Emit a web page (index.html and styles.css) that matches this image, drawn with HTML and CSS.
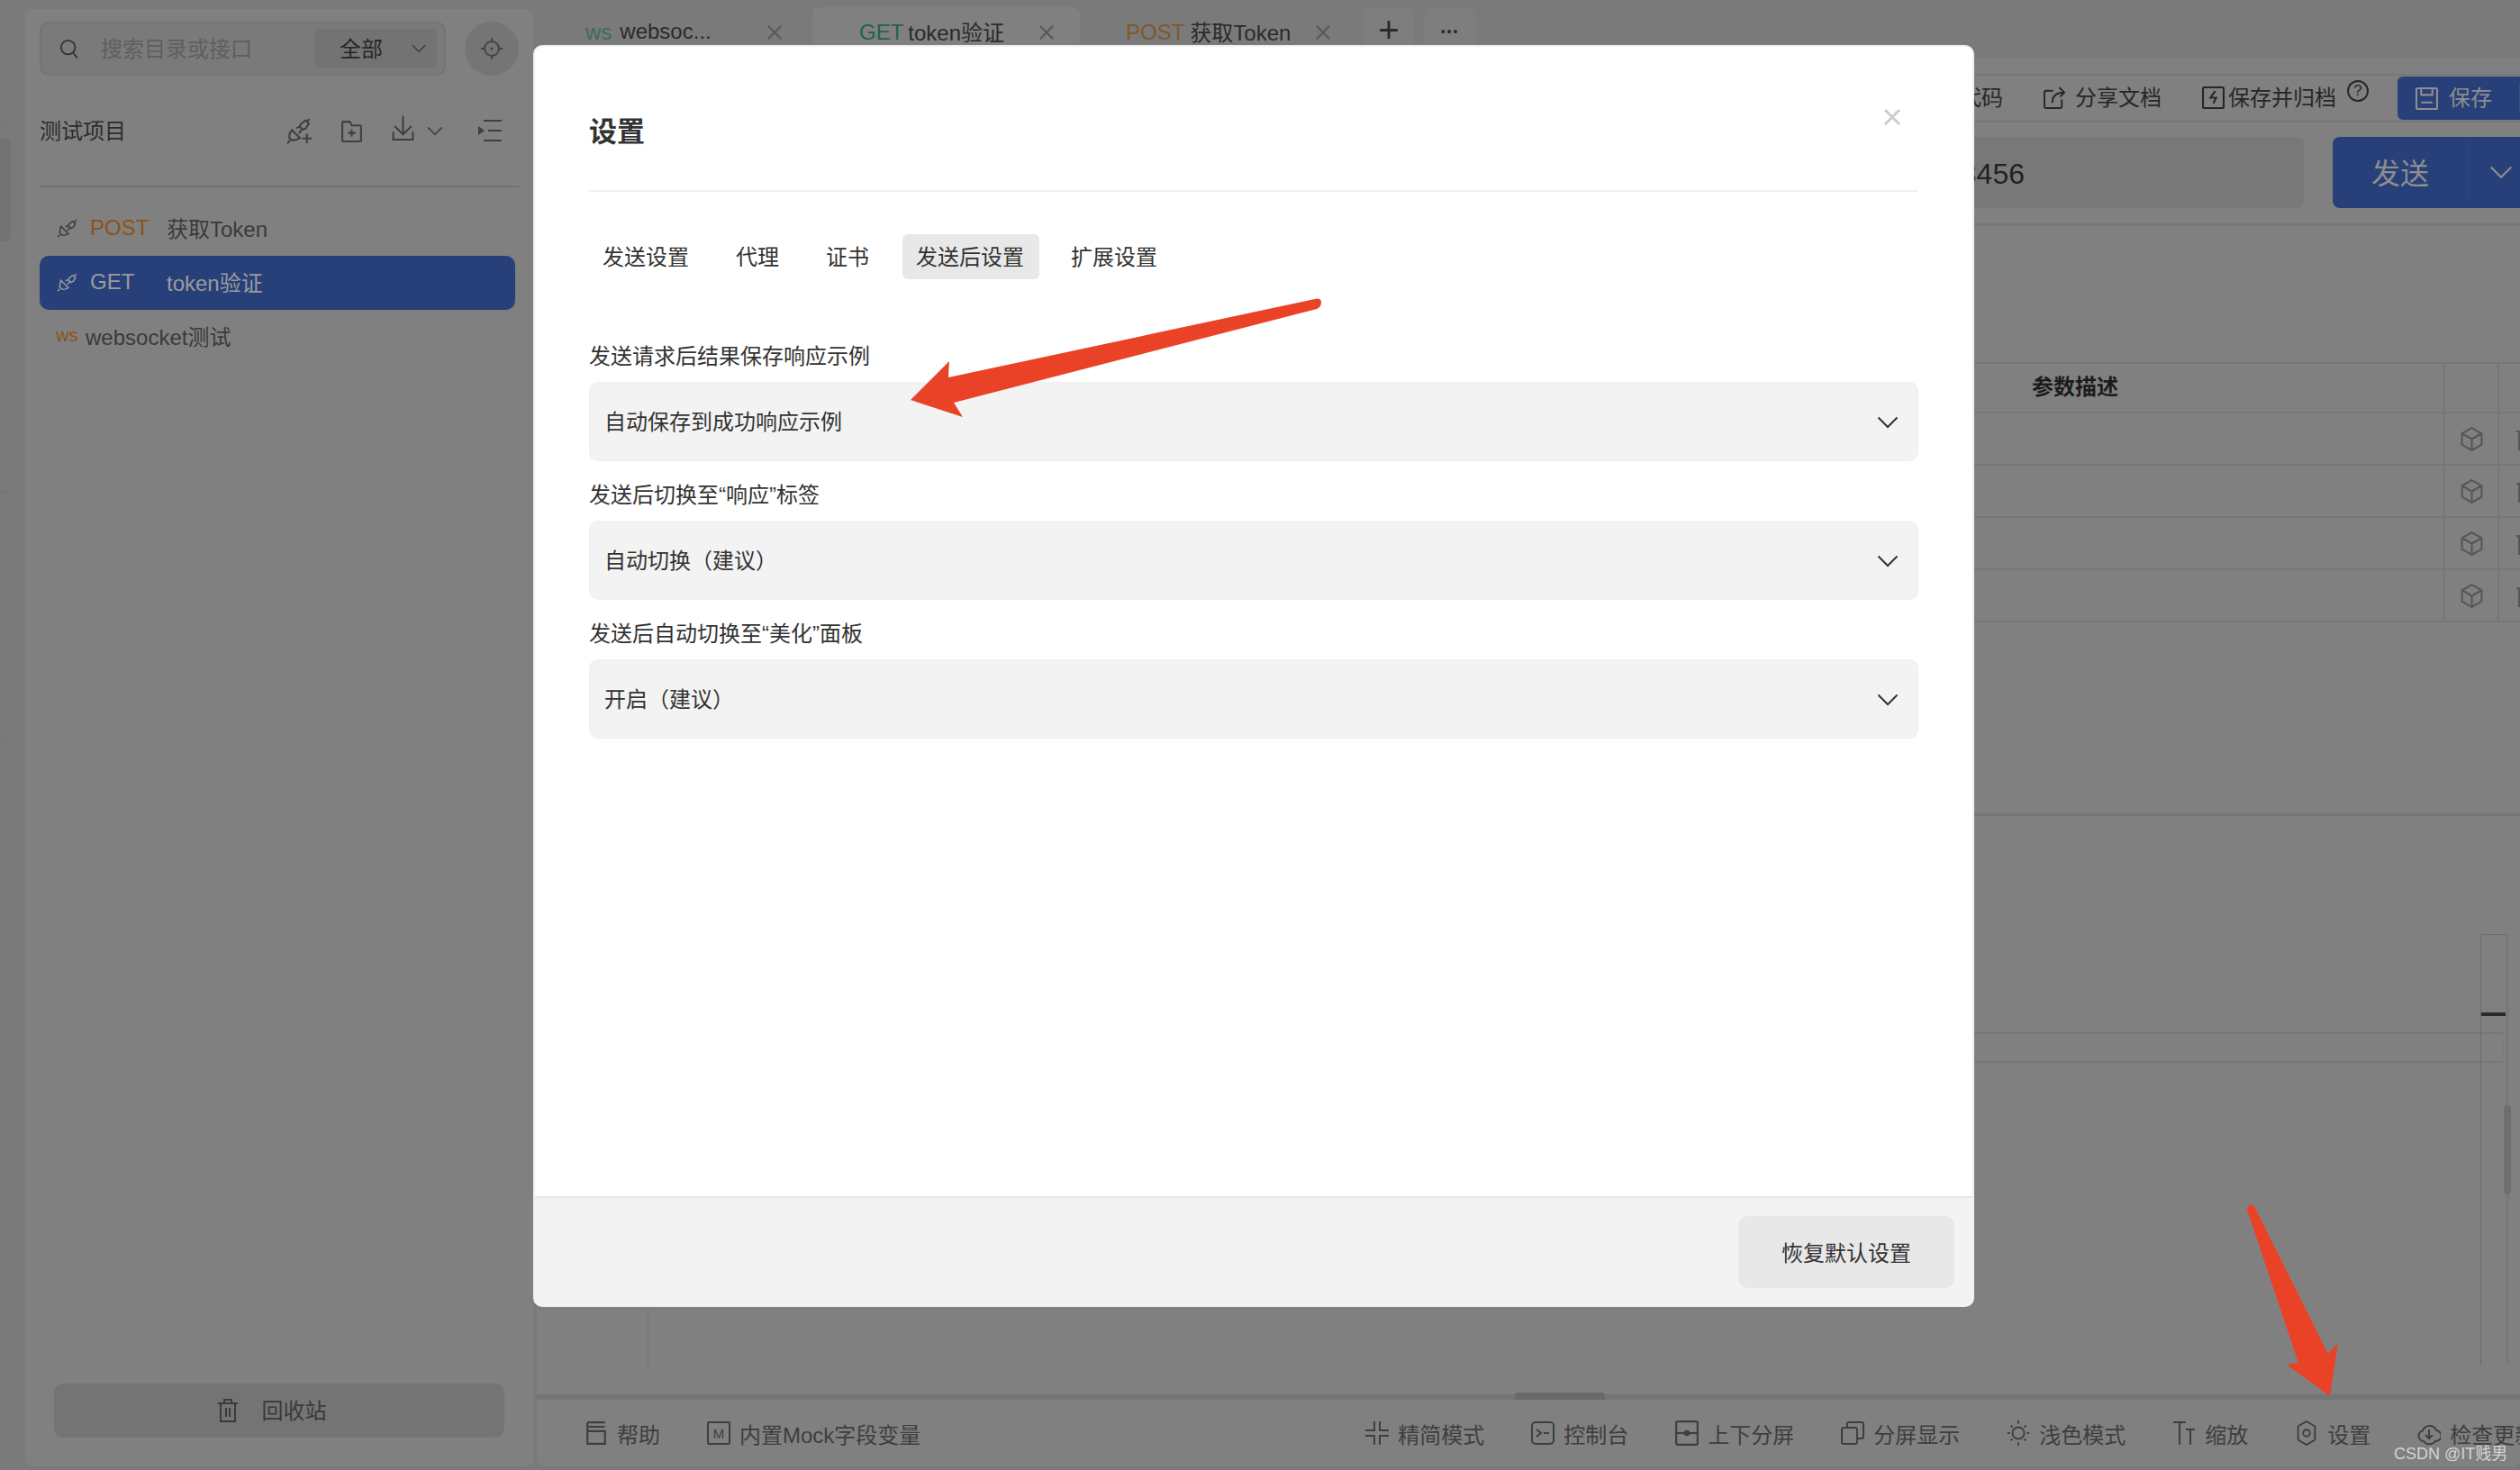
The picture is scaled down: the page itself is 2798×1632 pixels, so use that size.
FILE: index.html
```html
<!DOCTYPE html>
<html>
  <head>
    <meta charset="utf-8">
    <title>设置</title>
    <link rel="stylesheet" href="styles.css">
  </head>
  <body>
    <svg class="sprite" xmlns="http://www.w3.org/2000/svg">
      <symbol id="i-search" viewBox="0 0 24 24"><circle cx="10.5" cy="10.5" r="8.5"/><path d="M16.5 17l5 6"/></symbol>
      <symbol id="i-chev" viewBox="0 0 24 14"><path d="M1.5 1.5L12 12 22.5 1.5"/></symbol>
      <symbol id="i-locate" viewBox="0 0 24 24"><circle cx="12" cy="12" r="8"/><circle cx="12" cy="12" r="1.6" class="solid"/><path d="M12 0v4M12 20v4M0 12h4M20 12h4"/></symbol>
      <symbol id="i-plug" viewBox="0 0 24 24"><path d="M23 1l-2.500 2.500M14.500 5.500l4-2.500 3 3-2.500 4-3 1.500-3-3zM13 8l-3.500 1.500M14 11l-2 3"/><path d="M1 23l2.500-2.500M5 10l9 9-3.500 1.500-4 .500-3-3 .500-4z" transform="translate(-1 -1)"/></symbol>
      <symbol id="i-plug-add" viewBox="0 0 28 28"><path d="M25 1l-2.500 2.500M15.500 6.500l5-4 3.500 3.500-3 5-3.500 1.500-3.500-3.500zM14.500 9l-4 2M16 13l-2.500 3.500"/><path d="M1 27l3-3M6 13l8.500 8.500-4 2-4.500.500-3-3 .500-4.500z"/><path d="M22 17v10M17 22h10"/></symbol>
      <symbol id="i-folder-add" viewBox="0 0 24 24"><path d="M2 3a1 1 0 0 1 1-1h7l2 4h9a1 1 0 0 1 1 1v15a1 1 0 0 1-1 1H3a1 1 0 0 1-1-1z"/><path d="M12 10v8M8 14h8"/></symbol>
      <symbol id="i-download" viewBox="0 0 24 28"><path d="M12 1v19M3 12l9 9 9-9M1.500 18v8.500h21V18"/></symbol>
      <symbol id="i-collapse" viewBox="0 0 26 26"><path d="M6 2h20M11 13h15M6 24h20"/><path d="M0 8l7 5-7 5z" class="solid"/></symbol>
      <symbol id="i-trash" viewBox="0 0 24 28"><path d="M1 6h22M8 5V2h8v3M4 6v20h16V6M10 11v10M14 11v10"/></symbol>
      <symbol id="i-share" viewBox="0 0 26 26"><path d="M11 5H3a2 2 0 0 0-2 2v16a2 2 0 0 0 2 2h16a2 2 0 0 0 2-2v-8"/><path d="M10 19c0-7 4-12 13-12M18 1l6 6-5 5"/></symbol>
      <symbol id="i-archive" viewBox="0 0 24 24"><rect x="1" y="1" width="22" height="22" rx="1"/><path d="M14 5l-5 7h6l-3 6"/></symbol>
      <symbol id="i-save" viewBox="0 0 24 24"><rect x="1" y="1" width="22" height="22" rx="1.500"/><path d="M6 1v7h12V1M6 16h12"/></symbol>
      <symbol id="i-cube" viewBox="0 0 24 26"><path d="M12 1l10.500 6v12L12 25 1.500 19V7zM1.500 7L12 13l10.500-6M12 13v12"/></symbol>
      <symbol id="i-book" viewBox="0 0 24 24"><path d="M3 1h18M3 1v22h18V10H3M3 5.500h18"/></symbol>
      <symbol id="i-compress" viewBox="0 0 26 26"><path d="M10 0v10H0M16 0v10h10M0 16h10v10M26 16H16v10"/></symbol>
      <symbol id="i-console" viewBox="0 0 26 26"><rect x="1" y="1" width="24" height="24" rx="4"/><path d="M6 9l5 4-5 4M14 13h6"/></symbol>
      <symbol id="i-split" viewBox="0 0 24 26"><rect x="1" y="1" width="22" height="24" rx="1"/><path d="M1 13h22"/><circle cx="12" cy="13" r="3" class="solid"/></symbol>
      <symbol id="i-screens" viewBox="0 0 26 26"><rect x="1" y="7" width="17" height="18" rx="2"/><path d="M7 7V3a2 2 0 0 1 2-2h14a2 2 0 0 1 2 2v14a2 2 0 0 1-2 2h-5"/></symbol>
      <symbol id="i-sun" viewBox="0 0 26 30"><circle cx="13" cy="15" r="7"/><path d="M13 0v4M13 26v4M0 15h3M23 15h3M4 6l2 2M22 6l-2 2M4 24l2-2M22 24l-2-2"/></symbol>
      <symbol id="i-font" viewBox="0 0 26 28"><path d="M1 2h14M8 2v25M15 10h10M20 10v17"/></symbol>
      <symbol id="i-hex" viewBox="0 0 24 30"><path d="M12 1l10 6v16l-10 6-10-6V7z"/><circle cx="12" cy="15" r="4"/></symbol>
      <symbol id="i-cloud" viewBox="0 0 26 26"><path d="M7 22a6 6 0 0 1-1-11.800A8 8 0 0 1 21 10a6 6 0 0 1-1 12 8 8 0 0 1-13 0z"/><path d="M13 9v10M9 15l4 4 4-4"/></symbol>
      <symbol id="i-x" viewBox="0 0 20 20"><path d="M2 2l16 16M18 2L2 18"/></symbol>
    </svg>

    <div class="app">
      <div class="rail">
        <div class="rail-line rail-line-first"></div>
        <div class="rail-active"></div>
        <div class="rail-line rail-line-second"></div>
        <div class="rail-line rail-line-third"></div>
      </div>

      <aside class="sidebar">
        <div class="search-row">
          <div class="search-box">
            <svg class="ico ico-search"><use href="#i-search"/></svg>
            <span class="search-hint">搜索目录或接口</span>
            <div class="search-scope">
              <span>全部</span>
              <svg class="ico ico-chev-sm"><use href="#i-chev"/></svg>
            </div>
          </div>
          <div class="locate"><svg class="ico ico-locate"><use href="#i-locate"/></svg></div>
        </div>
        <div class="project-row">
          <span class="project-name">测试项目</span>
          <svg class="ico ico-plug-add"><use href="#i-plug-add"/></svg>
          <svg class="ico ico-folder"><use href="#i-folder-add"/></svg>
          <svg class="ico ico-download"><use href="#i-download"/></svg>
          <svg class="ico ico-chev-sm ico-chev-tree"><use href="#i-chev"/></svg>
          <svg class="ico ico-collapse"><use href="#i-collapse"/></svg>
        </div>
        <div class="tree">
          <div class="tree-item">
            <svg class="ico ico-plug"><use href="#i-plug"/></svg>
            <span class="method post">POST</span>
            <span>获取Token</span>
          </div>
          <div class="tree-item active">
            <svg class="ico ico-plug"><use href="#i-plug"/></svg>
            <span class="method">GET</span>
            <span>token验证</span>
          </div>
          <div class="tree-item ws-item">
            <span class="ws-tag">ws</span>
            <span>websocket测试</span>
          </div>
        </div>
        <div class="recycle">
          <svg class="ico ico-trash"><use href="#i-trash"/></svg>
          <span>回收站</span>
        </div>
      </aside>

      <main class="main">
        <div class="tabbar">
          <div class="tab tab-ws">
            <span class="tab-ws-tag">ws</span><span class="tab-title">websoc...</span>
            <svg class="ico ico-tab-x"><use href="#i-x"/></svg>
          </div>
          <div class="tab tab-get">
            <span class="tab-get-tag">GET</span><span class="tab-title">token验证</span>
            <svg class="ico ico-tab-x"><use href="#i-x"/></svg>
          </div>
          <div class="tab tab-post">
            <span class="tab-post-tag">POST</span><span class="tab-title">获取Token</span>
            <svg class="ico ico-tab-x"><use href="#i-x"/></svg>
          </div>
          <div class="tab-add">+</div>
          <div class="tab-more">•••</div>
        </div>

        <div class="panel">
          <div class="toolbar">
            <span class="tool"><span class="tool-text">生成代码</span></span>
            <span class="tool"><svg class="ico ico-tool"><use href="#i-share"/></svg><span class="tool-text">分享文档</span></span>
            <span class="tool tool-archive"><svg class="ico ico-tool"><use href="#i-archive"/></svg><span class="tool-text">保存并归档</span><span class="help-dot">?</span></span>
            <div class="save-btn">
              <svg class="ico ico-tool"><use href="#i-save"/></svg>
              <span class="tool-text">保存</span>
              <i class="save-split"></i>
            </div>
          </div>

          <div class="url-row">
            <div class="url-input"><span class="url-text">http://localhost?token=123456</span></div>
            <div class="send-btn">
              <span class="send-label">发送</span>
              <i class="send-split"></i>
              <svg class="ico ico-send-chev"><use href="#i-chev"/></svg>
            </div>
          </div>

          <div class="params">
            <div class="row head">
              <div class="cell-desc">参数描述</div>
              <div class="cell-act"></div>
              <div class="cell-del"></div>
            </div>
            <div class="row">
              <div class="cell-desc"></div>
              <div class="cell-act"><svg class="ico ico-cube"><use href="#i-cube"/></svg></div>
              <div class="cell-del"><svg class="ico ico-del"><use href="#i-trash"/></svg></div>
            </div>
            <div class="row">
              <div class="cell-desc"></div>
              <div class="cell-act"><svg class="ico ico-cube"><use href="#i-cube"/></svg></div>
              <div class="cell-del"><svg class="ico ico-del"><use href="#i-trash"/></svg></div>
            </div>
            <div class="row">
              <div class="cell-desc"></div>
              <div class="cell-act"><svg class="ico ico-cube"><use href="#i-cube"/></svg></div>
              <div class="cell-del"><svg class="ico ico-del"><use href="#i-trash"/></svg></div>
            </div>
            <div class="row">
              <div class="cell-desc"></div>
              <div class="cell-act"><svg class="ico ico-cube"><use href="#i-cube"/></svg></div>
              <div class="cell-del"><svg class="ico ico-del"><use href="#i-trash"/></svg></div>
            </div>
          </div>

          <div class="response">
            <div class="response-split"></div>
            <div class="response-row"></div>
            <div class="minimap">
              <div class="minimap-tick"></div>
              <div class="minimap-thumb"></div>
            </div>
          </div>

          <div class="scroll-strip"><div class="scroll-thumb"></div></div>

          <div class="statusbar">
            <span class="status"><svg class="ico ico-status"><use href="#i-book"/></svg>帮助</span>
            <span class="status"><span class="mock-box">M</span>内置Mock字段变量</span>
            <span class="status status-first"><svg class="ico ico-status"><use href="#i-compress"/></svg>精简模式</span>
            <span class="status"><svg class="ico ico-status"><use href="#i-console"/></svg>控制台</span>
            <span class="status"><svg class="ico ico-status"><use href="#i-split"/></svg>上下分屏</span>
            <span class="status"><svg class="ico ico-status"><use href="#i-screens"/></svg>分屏显示</span>
            <span class="status"><svg class="ico ico-status"><use href="#i-sun"/></svg>浅色模式</span>
            <span class="status"><svg class="ico ico-status"><use href="#i-font"/></svg>缩放</span>
            <span class="status"><svg class="ico ico-status"><use href="#i-hex"/></svg>设置</span>
            <span class="status"><svg class="ico ico-status"><use href="#i-cloud"/></svg>检查更新</span>
          </div>
        </div>
      </main>
    </div>

    <div class="modal">
      <div class="modal-title">设置</div>
      <svg class="ico modal-close"><use href="#i-x"/></svg>
      <div class="modal-body">
        <div class="modal-tabs">
          <span class="modal-tab">发送设置</span>
          <span class="modal-tab">代理</span>
          <span class="modal-tab">证书</span>
          <span class="modal-tab current">发送后设置</span>
          <span class="modal-tab">扩展设置</span>
        </div>
        <div class="field">
          <div class="field-label">发送请求后结果保存响应示例</div>
          <div class="select">
            <span>自动保存到成功响应示例</span>
            <svg class="ico ico-select"><use href="#i-chev"/></svg>
          </div>
        </div>
        <div class="field">
          <div class="field-label">发送后切换至“响应”标签</div>
          <div class="select">
            <span>自动切换（建议）</span>
            <svg class="ico ico-select"><use href="#i-chev"/></svg>
          </div>
        </div>
        <div class="field">
          <div class="field-label">发送后自动切换至“美化”面板</div>
          <div class="select">
            <span>开启（建议）</span>
            <svg class="ico ico-select"><use href="#i-chev"/></svg>
          </div>
        </div>
      </div>
      <div class="modal-footer">
        <button class="reset-btn">恢复默认设置</button>
      </div>
    </div>

    <svg class="arrows" viewBox="0 0 2798 1632" xmlns="http://www.w3.org/2000/svg">
      <path d="M1460 332Q1466 330 1467 335Q1467 341 1462 343L1059 447L1069 463L1011 444L1054 401L1053 419z"/>
      <path d="M2495 1343Q2496 1337 2501 1338Q2504 1339 2505 1343L2585 1503L2596 1491L2587 1550L2539 1515L2552 1513z"/>
    </svg>

    <div class="watermark">CSDN @IT贱男</div>
  </body>
</html>
```

FILE: styles.css
```css
* {
  box-sizing: border-box;
}

html, body {
  margin: 0;
  height: 100%;
  overflow: hidden;
}

body {
  position: relative;
  width: 2798px;
  height: 1632px;
  background: #7a7a7a;
  color: #262626;
  font-family: "Liberation Sans", "Noto Sans CJK SC", sans-serif;
  font-size: 24px;
}

.sprite {
  display: none;
}

.ico {
  display: block;
  flex-shrink: 0;
  fill: none;
  stroke: currentColor;
  stroke-width: 2;
}

.solid {
  fill: currentColor;
  stroke: none;
}

.app {
  display: flex;
  width: 2798px;
  height: 1632px;
}

/* left rail */
.rail {
  width: 28px;
  flex-shrink: 0;
  display: flex;
  flex-direction: column;
}

.rail-line {
  width: 12px;
  height: 1px;
  background: #747474;
}

.rail-line-first {
  margin-top: 138px;
}

.rail-active {
  width: 12px;
  height: 114px;
  margin-top: 15px;
  background: #727272;
  border-radius: 0 8px 8px 0;
}

.rail-line-second {
  margin-top: 277px;
}

.rail-line-third {
  margin-top: 276px;
}

/* sidebar */
.sidebar {
  width: 564px;
  flex-shrink: 0;
  height: 1618px;
  margin-top: 10px;
  padding: 14px 16px 32px;
  display: flex;
  flex-direction: column;
  background: #808080;
  border-radius: 8px;
}

.search-row {
  display: flex;
  gap: 21px;
}

.search-box {
  width: 451px;
  height: 60px;
  padding: 0 8px 0 20px;
  display: flex;
  align-items: center;
  background: #7a7a7a;
  border: 2px solid #747474;
  border-radius: 10px;
}

.ico-search {
  width: 22px;
  height: 24px;
  color: #333;
}

.search-hint {
  margin: -3px 0 0 24px;
  color: #5f5f5f;
}

.search-scope {
  margin-left: auto;
  width: 136px;
  height: 44px;
  padding-left: 28px;
  display: flex;
  align-items: center;
  background: #737373;
  border-radius: 6px;
}

.search-scope span {
  margin-top: -3px;
}

.ico-chev-sm {
  width: 16px;
  height: 10px;
  color: #3b3b3b;
}

.search-scope .ico-chev-sm {
  margin-left: 32px;
}

.locate {
  width: 60px;
  height: 60px;
  display: flex;
  align-items: center;
  justify-content: center;
  background: #757575;
  border-radius: 50%;
}

.ico-locate {
  width: 24px;
  height: 26px;
  color: #444;
}

.project-row {
  height: 60px;
  margin-top: 31px;
  display: flex;
  align-items: center;
  color: #2c2c2c;
}

.project-name {
  width: 274px;
  margin-top: -3px;
}

.ico-plug-add {
  width: 29px;
  height: 29px;
  color: #3f3f3f;
}

.ico-folder {
  width: 25px;
  height: 25px;
  margin-left: 31px;
  color: #3f3f3f;
}

.ico-download {
  width: 25px;
  height: 30px;
  margin-left: 32px;
  margin-top: -6px;
  color: #3f3f3f;
}

.ico-chev-tree {
  width: 18px;
  height: 11px;
  margin-left: 14px;
}

.ico-collapse {
  width: 26px;
  height: 26px;
  margin-left: 39px;
  color: #3f3f3f;
}

.tree {
  margin-top: 31px;
  padding-top: 16px;
  border-top: 2px solid #727272;
}

.tree-item {
  width: 528px;
  height: 60px;
  padding-left: 20px;
  display: flex;
  align-items: center;
  color: #3a3a3a;
  border-radius: 10px;
}

.tree-item span {
  margin-top: -3px;
}

.tree-item.active {
  background: #27407a;
  color: #9c9c9c;
}

.ico-plug {
  width: 22px;
  height: 22px;
  margin-right: 14px;
  stroke-width: 1.6;
}

.method {
  width: 85px;
}

.method.post {
  color: #8c5216;
}

.ws-item {
  padding-left: 18px;
}

.ws-tag {
  width: 33px;
  font-size: 20px;
  color: #8c5216;
}

.recycle {
  margin: auto 0 0 16px;
  width: 500px;
  height: 60px;
  padding-right: 18px;
  display: flex;
  align-items: center;
  justify-content: center;
  gap: 25px;
  background: #747474;
  border-radius: 10px;
  color: #3a3a3a;
}

.recycle span {
  margin-top: -3px;
}

.ico-trash {
  width: 26px;
  height: 28px;
}

/* main column */
.main {
  width: 2202px;
  flex-shrink: 0;
  margin-left: 4px;
  display: flex;
  flex-direction: column;
  overflow: hidden;
}

.tabbar {
  height: 64px;
  padding: 8px 0 0 6px;
  display: flex;
  gap: 3px;
  background: #7a7a7a;
}

.tab {
  width: 297px;
  height: 56px;
  padding: 0 30px 0 48px;
  display: flex;
  align-items: center;
  border-radius: 8px 8px 0 0;
}

.tab-get {
  padding-left: 52px;
  padding-right: 28px;
  background: #808080;
}

.tab-post {
  padding-right: 21px;
}

.tab-ws-tag {
  margin-right: 9px;
  color: #3d6b5b;
}

.tab-get-tag {
  margin-right: 5px;
  color: #24614c;
}

.tab-post-tag {
  margin-right: 6px;
  color: #80572c;
}

.tab-title {
  margin-top: -3px;
  color: #2a2a2a;
}

.ico-tab-x {
  width: 18px;
  height: 20px;
  margin-left: auto;
  color: #595959;
  stroke-width: 2.5;
}

.tab-add, .tab-more {
  width: 56px;
  height: 56px;
  display: flex;
  align-items: center;
  justify-content: center;
  background: #7e7e7e;
  border-radius: 8px 8px 0 0;
  font-size: 40px;
  color: #2a2a2a;
}

.tab-add {
  margin-left: 12px;
  padding-bottom: 6px;
  font-weight: 300;
}

.tab-more {
  margin-left: 9px;
  font-size: 14px;
  letter-spacing: 2px;
  padding-bottom: 2px;
}

.panel {
  flex: 1;
  min-height: 0;
  margin-bottom: 4px;
  padding-top: 18px;
  display: flex;
  flex-direction: column;
  background: #808080;
  border-radius: 0 0 8px 8px;
}

.toolbar {
  height: 54px;
  display: flex;
  align-items: center;
  justify-content: flex-end;
  gap: 45px;
  border-top: 2px solid #767676;
  border-bottom: 2px solid #767676;
  color: #262626;
}

.tool {
  display: flex;
  align-items: center;
  gap: 10px;
  white-space: nowrap;
}

.tool > .ico {
  margin-top: -2px;
}

.tool-text {
  margin-top: -6px;
}

.tool-archive {
  gap: 4px;
  margin-right: -13px;
}

.ico-tool {
  width: 25px;
  height: 25px;
}

.help-dot {
  width: 24px;
  height: 24px;
  margin: -16px 0 0 8px;
  display: flex;
  align-items: center;
  justify-content: center;
  border: 2px solid #262626;
  border-radius: 50%;
  font-size: 17px;
}

.save-btn {
  width: 136px;
  height: 48px;
  padding-left: 20px;
  display: flex;
  align-items: center;
  gap: 12px;
  background: #27407a;
  border-radius: 6px 0 0 6px;
  color: #8e8e8e;
}

.save-split {
  width: 1px;
  height: 32px;
  margin-left: 18px;
  background: #35507f;
}

.url-row {
  height: 115px;
  padding-top: 16px;
  display: flex;
  gap: 32px;
  border-bottom: 3px solid #767676;
}

.url-input {
  width: 1962px;
  height: 79px;
  padding-top: 3px;
  display: flex;
  align-items: center;
  background: #787878;
  border-radius: 8px;
  font-size: 32px;
}

.url-text {
  width: 1652px;
  text-align: right;
  color: #222;
  white-space: nowrap;
}

.send-btn {
  width: 208px;
  height: 79px;
  flex-shrink: 0;
  padding-left: 43px;
  display: flex;
  align-items: center;
  background: #27407a;
  border-radius: 8px 0 0 8px;
  color: #8e8e8e;
  font-size: 32px;
}

.send-label {
  margin-top: -3px;
}

.send-split {
  width: 1px;
  height: 65px;
  margin-left: 42px;
  background: #2f4a80;
}

.ico-send-chev {
  width: 26px;
  height: 15px;
  margin-left: 24px;
}

/* params table */
.params {
  margin-top: 151px;
  border-top: 2px solid #767676;
}

.row {
  height: 58px;
  display: flex;
  border-bottom: 2px solid #767676;
}

.row.head {
  height: 55px;
}

.cell-desc {
  width: 2117px;
  padding: 0 0 7px 1660px;
  display: flex;
  align-items: center;
  font-weight: 700;
  color: #1c1c1c;
}

.cell-act {
  width: 60px;
  display: flex;
  align-items: center;
  justify-content: center;
  border-left: 2px solid #767676;
}

.cell-del {
  width: 25px;
  padding-left: 17px;
  display: flex;
  align-items: center;
  overflow: hidden;
  border-left: 2px solid #767676;
}

.ico-cube {
  width: 25px;
  height: 27px;
  color: #565656;
}

.ico-del {
  width: 26px;
  height: 28px;
  color: #565656;
}

/* response pane, pieces share one grid cell */
.response {
  flex: 1;
  min-height: 0;
  margin-top: 212px;
  display: grid;
  grid-template-columns: 1fr;
  grid-template-rows: 1fr;
  border-top: 3px solid #767676;
}

.response > * {
  grid-area: 1 / 1;
}

.response-split {
  width: 1px;
  margin: 0 0 30px 123px;
  background: #737373;
}

.response-row {
  height: 34px;
  margin: 240px 18px 0 0;
  border-top: 2px solid #767676;
  border-bottom: 2px solid #767676;
  border-right: 1px solid #7a7a7a;
}

.minimap {
  position: relative;
  justify-self: end;
  width: 32px;
  margin: 131px 12px 32px 0;
  border-left: 1px solid #6a6a6a;
  border-top: 1px solid #6e6e6e;
  border-right: 4px solid #7a7a7a;
}

.minimap-tick {
  width: 27px;
  height: 4px;
  margin-top: 86px;
  background: #2a2a2a;
}

.minimap-thumb {
  position: absolute;
  top: 189px;
  right: -6px;
  width: 8px;
  height: 99px;
  background: #6e6e6e;
  border-radius: 4px;
}

.scroll-strip {
  height: 6px;
  background: #747474;
}

.scroll-thumb {
  width: 100px;
  height: 8px;
  margin: -2px 0 0 1086px;
  background: #696969;
  border-radius: 4px 4px 0 0;
}

.statusbar {
  height: 74px;
  padding-left: 53px;
  display: flex;
  align-items: center;
  gap: 52px;
  color: #3e3e3e;
}

.status {
  display: flex;
  align-items: center;
  gap: 10px;
  white-space: nowrap;
}

.status-first {
  margin-left: 442px;
}

.ico-status {
  width: 26px;
  height: 28px;
}

.mock-box {
  width: 26px;
  height: 26px;
  display: flex;
  align-items: center;
  justify-content: center;
  border: 2px solid #3e3e3e;
  border-radius: 2px;
  font-size: 15px;
}

/* dialog */
.modal {
  position: absolute;
  left: 592px;
  top: 50px;
  width: 1600px;
  height: 1401px;
  display: flex;
  flex-direction: column;
  background: #fff;
  border: 2px solid #f0f0f0;
  border-radius: 10px;
  overflow: hidden;
  color: #333;
}

.modal-title {
  margin: 0 60px;
  height: 161px;
  padding-top: 73px;
  line-height: 44px;
  border-bottom: 2px solid #f2f2f2;
  font-size: 31px;
  font-weight: 600;
}

.modal-close {
  position: absolute;
  top: 68px;
  right: 79px;
  width: 20px;
  height: 20px;
  color: #ccc;
  stroke-width: 3;
}

.modal-body {
  flex: 1;
  padding: 47px 60px 0;
}

.modal-tabs {
  display: flex;
  gap: 20px;
  margin-bottom: 69px;
}

.modal-tab {
  height: 50px;
  padding: 0 17px 0 15px;
  line-height: 52px;
  border-radius: 6px;
}

.modal-tab.current {
  background: #e8e8e8;
}

.field {
  margin-bottom: 21px;
}

.field-label {
  height: 34px;
  line-height: 34px;
  margin-bottom: 11px;
}

.select {
  height: 88px;
  padding: 0 20px 0 15px;
  display: flex;
  align-items: center;
  justify-content: space-between;
  background: #f3f3f3;
  border: 2px solid #f1f1f1;
  border-radius: 10px;
}

.select span {
  margin-top: -3px;
}

.ico-select {
  width: 24px;
  height: 14px;
  margin-top: 1px;
  color: #333;
}

.modal-footer {
  height: 121px;
  padding-right: 20px;
  display: flex;
  align-items: center;
  justify-content: flex-end;
  background: #f3f3f3;
  border-top: 2px solid #e8e8e8;
}

.reset-btn {
  width: 240px;
  height: 80px;
  border: 0;
  border-radius: 10px;
  background: #e8e8e8;
  color: #333;
  font: inherit;
}

/* red marks drawn over the screenshot */
.arrows {
  position: absolute;
  left: 0;
  top: 0;
  width: 2798px;
  height: 1632px;
  fill: #ea4227;
  pointer-events: none;
}

.watermark {
  position: absolute;
  left: 2658px;
  top: 1603px;
  font-size: 18px;
  line-height: 22px;
  color: #d4d4d4;
  white-space: nowrap;
}
```
